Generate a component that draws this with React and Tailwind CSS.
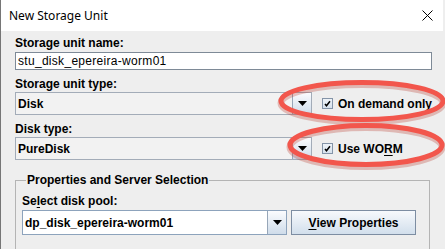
import React from "react";

const Arrow = () => (
  <svg width="9" height="5" viewBox="0 0 9 5">
    <polygon points="0,0 9,0 4.5,5" fill="#000" />
  </svg>
);

const Combo = ({ text, w, h, white }) => (
  <div
    className={`flex ${h} ${w} border ${
      white ? "border-[#8da3bc] bg-white" : "border-[#a3acb8] bg-[#f2f2f2]"
    }`}
  >
    <div className="flex flex-1 items-center pl-[2px] text-[12px] font-bold text-black">
      {text}
    </div>
    <div className="flex w-[19px] items-center justify-center border-l border-[#97a6b8] bg-gradient-to-b from-[#fbfcfe] to-[#cfdcea]">
      <Arrow />
    </div>
  </div>
);

const Check = ({ children }) => (
  <div className="ml-[10px] flex items-center">
    <div className="flex h-[11px] w-[11px] items-center justify-center border border-[#8494a8] bg-gradient-to-b from-[#eef3f8] to-[#d6e1ec]">
      <svg width="9" height="9" viewBox="0 0 9 9">
        <path d="M2 5 L3.5 6.8 L7 2.2" stroke="#000" strokeWidth="1.5" fill="none" />
      </svg>
    </div>
    <div className="ml-[5px] text-[12px] font-bold text-black">{children}</div>
  </div>
);

export default function App() {
  return (
    <div className="relative h-[249px] w-[445px] overflow-hidden bg-[#eeeeee] font-['Liberation_Sans',Arial,sans-serif]">
      <div className="h-full w-[443px] border-l border-[#767676]">
        <div className="flex h-[31px] items-center justify-between bg-white pl-[8px] pr-[10px]">
          <span className="font-['Noto_Sans',sans-serif] text-[12px] text-black">New Storage Unit</span>
          <svg width="11" height="11" viewBox="0 0 11 11">
            <path d="M0.5 0.5 L10.5 10.5 M10.5 0.5 L0.5 10.5" stroke="#000" strokeWidth="1" />
          </svg>
        </div>
        <div className="flex flex-col pl-[14px] pr-[10px] pt-[5px]">
          <div className="h-[14px] text-[12px] font-bold leading-[14px] text-black">Storage unit name:</div>
          <div className="mt-[2px] flex h-[18px] w-[417px] items-center border border-[#7e8a97] bg-white pl-[2px] text-[12px] tracking-[0.3px] text-black">
            stu_disk_epereira-worm01
          </div>
          <div className="mt-[7px] h-[14px] text-[12px] font-bold leading-[14px] text-black">Storage unit type:</div>
          <div className="mt-[1px] flex items-center">
            <Combo text="Disk" w="w-[297px]" h="h-[23px]" />
            <Check>On demand only</Check>
          </div>
          <div className="mt-[7px] h-[14px] text-[12px] font-bold leading-[14px] text-black">Disk type:</div>
          <div className="mt-[1px] flex items-center">
            <Combo text="PureDisk" w="w-[297px]" h="h-[23px]" />
            <Check>
              Use WO<span className="underline underline-offset-[2px]">R</span>M
            </Check>
          </div>
          <fieldset className="mt-[13px] h-[90px] w-[415px] border border-[#b4b4b4] px-[6px]">
            <legend className="ml-[4px] px-[1px] text-[12px] font-bold leading-[14px] text-black">
              Properties and Server Selection
            </legend>
            <div className="mt-[7px] h-[14px] text-[12px] font-bold leading-[14px] text-black">
              Se<span className="underline underline-offset-[2px]">l</span>ect disk pool:
            </div>
            <div className="mt-[2px] flex items-center">
              <Combo text="dp_disk_epereira-worm01" w="w-[265px]" h="h-[25px]" white />
              <div className="ml-[4px] flex h-[25px] w-[125px] items-center justify-center border border-[#7d8da2] bg-gradient-to-b from-[#f7f9fc] to-[#d2dfec] text-[12px] font-bold text-black">
                <span className="underline underline-offset-[2px]">V</span>iew Properties
              </div>
            </div>
          </fieldset>
        </div>
      </div>
      <svg className="pointer-events-none absolute left-0 top-0" width="445" height="249" viewBox="0 0 445 249">
        <ellipse cx="362" cy="102" rx="81" ry="18.5" fill="none" stroke="#b83a30" strokeOpacity="0.3" strokeWidth="7" transform="translate(0 1)" />
        <ellipse cx="362" cy="101" rx="81" ry="18.5" fill="none" stroke="#f2564c" strokeWidth="5" />
        <ellipse cx="366" cy="146" rx="76" ry="19.5" fill="none" stroke="#b83a30" strokeOpacity="0.3" strokeWidth="7" transform="translate(0 1)" />
        <ellipse cx="366" cy="145" rx="76" ry="19.5" fill="none" stroke="#f2564c" strokeWidth="5" />
      </svg>
    </div>
  );
}
